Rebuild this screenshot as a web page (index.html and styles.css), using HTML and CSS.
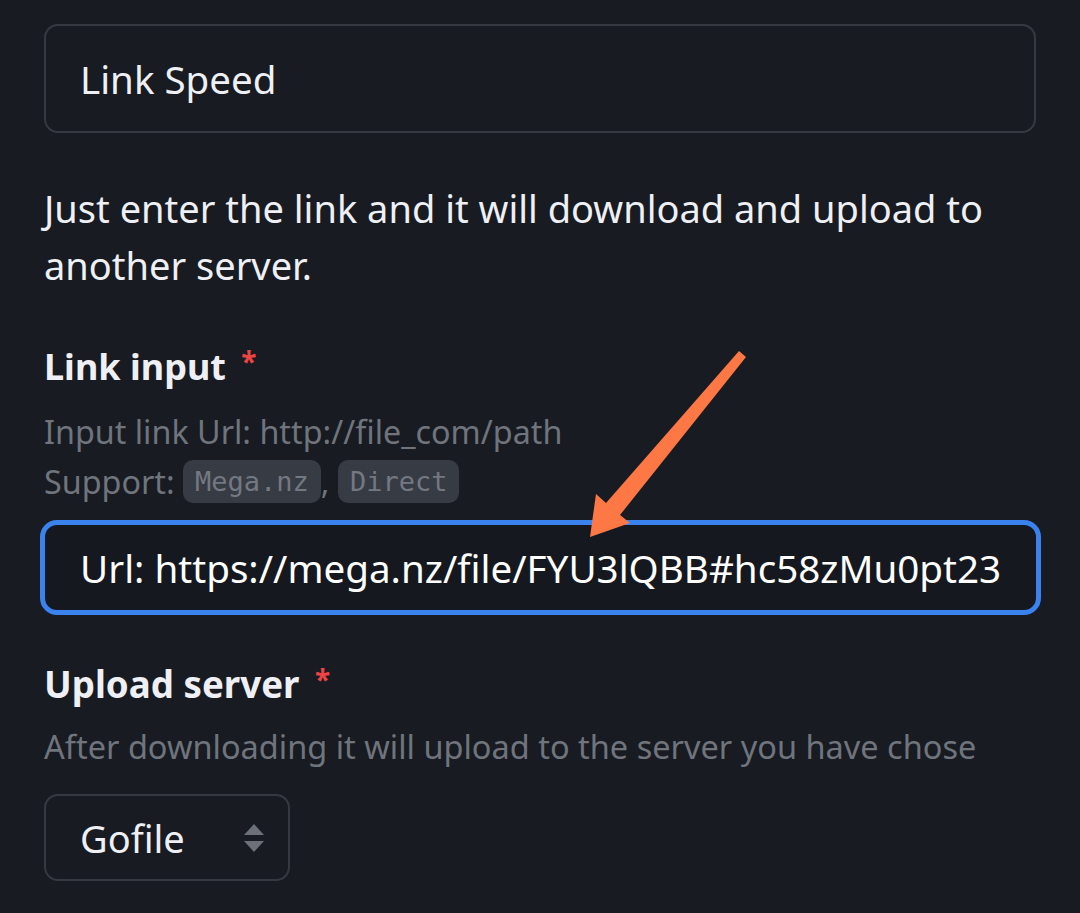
FILE: index.html
```html
<!DOCTYPE html>
<html>
<head>
<meta charset="utf-8">
<link rel="stylesheet" href="styles.css">
</head>
<body>
<div class="page">
  <div class="title-box">Link Speed</div>
  <p class="desc">Just enter the link and it will download and upload to another server.</p>

  <div class="field">
    <div class="label">Link input <span class="req">*</span></div>
    <div class="help">Input link Url: http://file_com/path<br>Support: <code class="chip">Mega.nz</code>, <code class="chip">Direct</code></div>
    <div class="input focused"><span class="input-text">Url: https://mega.nz/file/FYU3lQBB#hc58zMu0pt23</span></div>
  </div>

  <div class="field field-2">
    <div class="label label-2">Upload server <span class="req">*</span></div>
    <div class="help help-2">After downloading it will upload to the server you have chose</div>
    <div class="select">
      <span>Gofile</span>
      <svg class="updown" width="20" height="28" viewBox="0 0 20 28"><path d="M10 0 L20 11 L0 11 Z" fill="#6b7079"/><path d="M0 17 L20 17 L10 28 Z" fill="#6b7079"/></svg>
    </div>
  </div>

  <svg class="arrow" width="1080" height="913" viewBox="0 0 1080 913">
    <path d="M746 357 L739 351 L606 503 L596 494 L590 537 L630 523 L620 515 Z" fill="#fe7846"/>
  </svg>
</div>
</body>
</html>
```

FILE: styles.css
```css
html, body {
  margin: 0;
  padding: 0;
  background: #181b21;
}
body {
  font-family: "Noto Sans", "Open Sans", sans-serif;
  color: #eef0f5;
}
.page {
  position: relative;
  width: 1080px;
  height: 913px;
  overflow: hidden;
  box-sizing: border-box;
  padding: 24px 44px 0 44px;
}
.title-box {
  width: 992px;
  height: 109px;
  box-sizing: border-box;
  border: 2px solid #363942;
  border-radius: 14px;
  display: flex;
  align-items: center;
  padding-left: 34px;
  font-size: 38.5px;
}
.desc {
  margin: 47px 0 0 0;
  font-size: 38px;
  line-height: 57px;
  width: 992px;
}
.field {
  margin-top: 43px;
}
.field-2 {
  margin-top: 40px;
}
.label {
  font-size: 36px;
  font-weight: 700;
  line-height: 48px;
}
.label-2 {
  font-size: 36.7px;
}
.req {
  color: #ef4444;
  font-size: 28px;
  vertical-align: 8px;
  margin-left: 6px;
}
.help {
  margin-top: 15px;
  font-size: 32.3px;
  line-height: 50px;
  color: #6f747d;
}
.help-2 {
  margin-top: 14px;
  font-size: 32.5px;
}
.chip {
  display: inline-block;
  vertical-align: top;
  margin-top: 4px;
  height: 43px;
  line-height: 43px;
  font-family: "DejaVu Sans Mono", monospace;
  font-size: 27px;
  background: #373b43;
  color: #737882;
  border-radius: 10px;
  padding: 0 12px;
}
.input {
  margin-top: 14px;
  margin-left: -4px;
  width: 1001px;
  height: 95px;
  box-sizing: border-box;
  border: 5px solid #3a82ee;
  border-radius: 17px;
  display: flex;
  align-items: center;
  padding-left: 35px;
  background: #15181e;
  overflow: hidden;
}
.input-text {
  white-space: nowrap;
  font-size: 38.6px;
  color: #ffffff;
}
.select {
  margin-top: 22px;
  width: 246px;
  height: 87px;
  box-sizing: border-box;
  border: 2px solid #363942;
  border-radius: 14px;
  display: flex;
  align-items: center;
  justify-content: space-between;
  padding: 0 24px 0 34px;
  font-size: 38px;
}
.updown {
  display: block;
}
.arrow {
  position: absolute;
  left: 0;
  top: 0;
  pointer-events: none;
}
```
